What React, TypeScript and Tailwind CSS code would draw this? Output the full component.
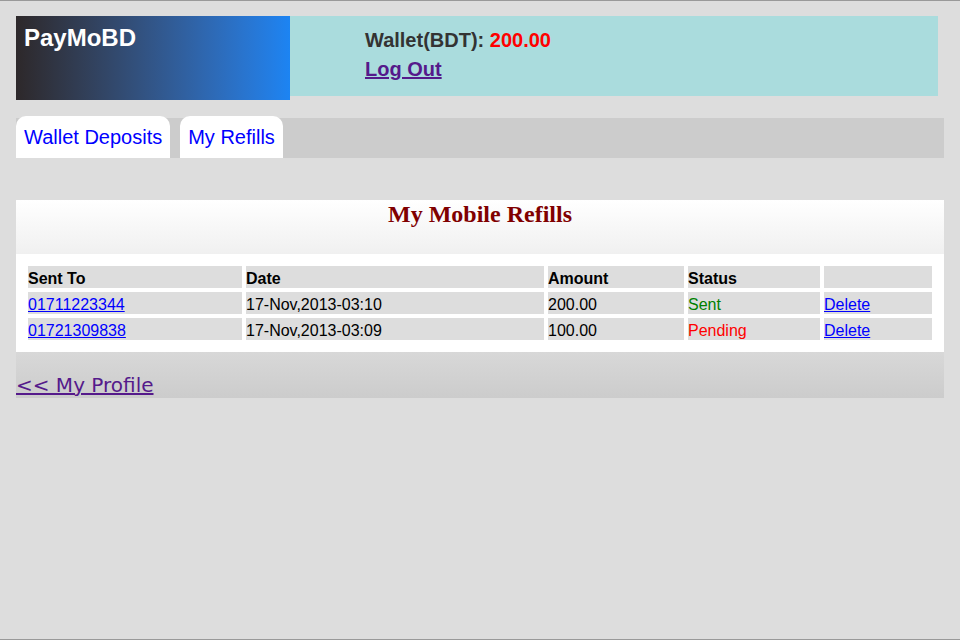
const refills = [
  { to: '01711223344', date: '17-Nov,2013-03:10', amount: '200.00', status: 'Sent' },
  { to: '01721309838', date: '17-Nov,2013-03:09', amount: '100.00', status: 'Pending' },
];

const cell = 'bg-[#dddddd] p-0 pt-[4px] leading-[18px] h-[22px] align-top text-left';

export default function App() {
  return (
    <div className="h-[640px] bg-[#dddddd] border-t border-b border-[#999999] font-['Liberation_Sans',Arial,sans-serif] text-[16px] text-black">
      <div className="px-[16px] pt-[15px]">
        {/* Header */}
        <div className="flex items-start">
          <div className="w-[274px] h-[84px] bg-gradient-to-r from-[#2d282a] to-[#1c84f3] pl-[8px] pt-[8px]">
            <div className="text-[24px] font-bold text-white leading-[27px]">PayMoBD</div>
          </div>
          <div className="w-[648px] h-[80px] bg-[#aadcdd] pl-[75px] pt-[10px] leading-[29px] text-[20px] font-bold">
            <div className="text-[#333333]">
              Wallet(BDT): <span className="text-[#ff0000]">200.00</span>
            </div>
            <a href="#" className="text-[#551a8b] underline">
              Log Out
            </a>
          </div>
        </div>

        {/* Tabs */}
        <div className="mt-[18px] h-[40px] bg-[#cccccc] flex items-end gap-[10px]">
          <a href="#" className="h-[42px] shrink-0 bg-white rounded-t-[10px] px-[8px] pt-[10px] text-[20px] leading-[23px] text-[#0000ff]">
            Wallet Deposits
          </a>
          <a href="#" className="h-[42px] shrink-0 bg-white rounded-t-[10px] px-[8px] pt-[10px] text-[20px] leading-[23px] text-[#0000ff]">
            My Refills
          </a>
        </div>

        {/* Refills panel */}
        <div className="mt-[42px]">
          <div className="h-[54px] bg-gradient-to-b from-white to-[#f0f0f0]">
            <h2 className="text-center font-['Liberation_Serif','Times_New_Roman',serif] font-bold text-[24px] leading-[28px] text-[#800000]">
              My Mobile Refills
            </h2>
          </div>
          <div className="bg-white px-[8px] py-[8px]">
            <table className="border-separate border-spacing-[4px] w-[912px]">
              <thead>
                <tr>
                  <th className={`${cell} w-[214px] font-bold`}>Sent To</th>
                  <th className={`${cell} w-[298px] font-bold`}>Date</th>
                  <th className={`${cell} w-[136px] font-bold`}>Amount</th>
                  <th className={`${cell} w-[132px] font-bold`}>Status</th>
                  <th className={`${cell} w-[108px]`}></th>
                </tr>
              </thead>
              <tbody>
                {refills.map((r) => (
                  <tr key={r.to}>
                    <td className={cell}>
                      <a href="#" className="text-[#0000ff] underline">{r.to}</a>
                    </td>
                    <td className={cell}>{r.date}</td>
                    <td className={cell}>{r.amount}</td>
                    <td className={`${cell} ${r.status === 'Sent' ? 'text-[#008000]' : 'text-[#ff0000]'}`}>{r.status}</td>
                    <td className={cell}>
                      <a href="#" className="text-[#0000ff] underline">Delete</a>
                    </td>
                  </tr>
                ))}
              </tbody>
            </table>
          </div>
          <div className="h-[46px] bg-gradient-to-b from-[#d8d8d8] to-[#cccccc] flex items-end pb-[1px]">
            <a href="#" className="font-['DejaVu_Sans',Verdana,sans-serif] text-[20px] leading-[23px] text-[#551a8b] underline">
              &lt;&lt; My Profile
            </a>
          </div>
        </div>
      </div>
    </div>
  );
}
